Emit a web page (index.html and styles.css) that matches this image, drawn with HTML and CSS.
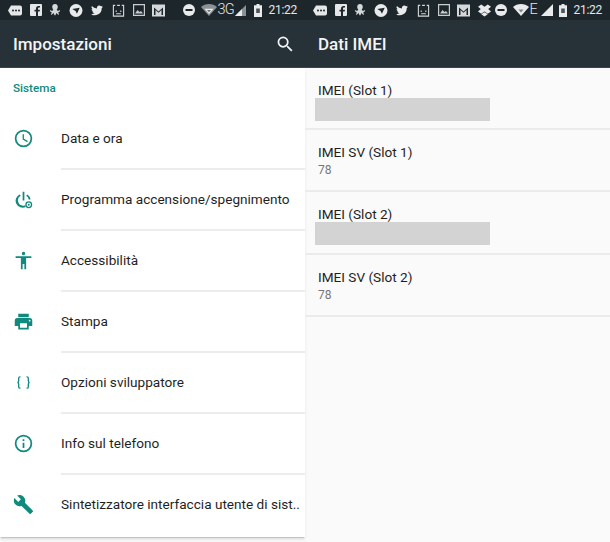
FILE: index.html
```html
<!DOCTYPE html>
<html lang="it">
<head>
<meta charset="utf-8">
<title>Impostazioni</title>
<link rel="stylesheet" href="styles.css">
</head>
<body>
<svg class="defs" width="0" height="0" aria-hidden="true">
  <defs>
    <symbol id="s-msg" viewBox="0 0 14 12"><path d="M3 1h9a2 2 0 0 1 2 2v6a2 2 0 0 1-2 2H3L0 6z" fill="#e4e6e7"/><circle cx="5" cy="6" r="1" fill="#1d262b"/><circle cx="8" cy="6" r="1" fill="#1d262b"/><circle cx="11" cy="6" r="1" fill="#1d262b"/></symbol>
    <symbol id="s-fb" viewBox="0 0 12 12"><path d="M1 0h10a1 1 0 0 1 1 1v10a1 1 0 0 1-1 1H8V7.500h1.600L10 5.700H8V4.500c0-.6.300-.9 1-.9h1V2H8.500C7 2 6 3 6 4.500v1.200H4.500v1.800H6V12H1a1 1 0 0 1-1-1V1a1 1 0 0 1 1-1z" fill="#e4e6e7"/></symbol>
    <symbol id="s-oct" viewBox="0 0 12 13"><path d="M6 0c2 0 3 1.300 3 3s-.6 2.500-1 3c-.4.600.4 1 1 1.300.8.300 2 0 2.500-1 .3 1.500-.8 2.700-2 2.700.2 1 .6 2 1 2.500-1.300.2-2.400-.8-3-2-.3 1-.6 2.300-1.500 3-.9-.7-1.200-2-1.500-3-.6 1.200-1.700 2.200-3 2 .4-.5.800-1.500 1-2.500-1.200 0-2.300-1.200-2-2.700.5 1 1.700 1.300 2.500 1C3.600 7 4.400 6.600 4 6c-.4-.5-1-1.300-1-3s1-3 3-3z" fill="#d5d8d9"/></symbol>
    <symbol id="s-tg" viewBox="0 0 14 14"><circle cx="7" cy="7" r="7" fill="#e8eaeb"/><path d="M3 5.500 11 4 8 10.500 6.500 7.500z" fill="#1d262b"/></symbol>
    <symbol id="s-tw" viewBox="0 0 24 24"><path fill="#e8eaeb" d="M23 4.900c-.8.400-1.700.6-2.600.8a4.500 4.500 0 0 0 2-2.500c-.9.500-1.900.9-2.900 1.100a4.500 4.500 0 0 0-7.700 4.100A12.800 12.800 0 0 1 2.500 3.700a4.500 4.500 0 0 0 1.400 6c-.7 0-1.400-.2-2-.6 0 2.200 1.500 4.100 3.600 4.500-.7.200-1.400.2-2 .1.600 1.800 2.200 3.100 4.200 3.100A9 9 0 0 1 1 18.700 12.800 12.800 0 0 0 20.700 7.300c.9-.6 1.700-1.400 2.300-2.400z"/></symbol>
    <symbol id="s-tv" viewBox="0 0 13 14"><path d="M3 1.500H1V13h11V1.500h-2M5 1.500h3" fill="none" stroke="#d5d8d9" stroke-width="1.200"/><path d="M4 7v1.500M9 7v1.500M4 10.500h5" stroke="#d5d8d9" stroke-width="1.200"/></symbol>
    <symbol id="s-img" viewBox="0 0 12 12"><path d="M.6.600h10.800v10.800H.6z" fill="none" stroke="#c9cdcf" stroke-width="1.200"/><path d="M2 9.500 4.500 6 6.500 8 8 7l2 2.500z" fill="#c9cdcf"/></symbol>
    <symbol id="s-gm" viewBox="0 0 13 12"><rect x="0" y="0" width="13" height="12" fill="#d5d8d9"/><path d="M2 10.500V3l4.500 4L11 3v7.500z" fill="#1d262b"/><path d="M3.500 10.500V5.500l3 2.700 3-2.700v5z" fill="#d5d8d9"/></symbol>
    <symbol id="s-dnd" viewBox="0 0 12 12"><circle cx="6" cy="6" r="6" fill="#e8eaeb"/><rect x="2.500" y="5" width="7" height="2" fill="#1d262b"/></symbol>
    <symbol id="s-wifi" viewBox="0 0 16 12"><path d="M0 3C4-1 12-1 16 3L8 12z" fill="#e8eaeb"/><path d="M5.500 5.500h5L8 8.500z" fill="#7e8588"/></symbol>
    <symbol id="s-wifi-dim" viewBox="0 0 16 12"><path d="M0 3C4-1 12-1 16 3L8 12z" fill="#8b9194"/><path d="M3.500 4.800h9L8 10z" fill="#e8eaeb"/><path d="M6 6h4L8 8.200z" fill="#6c7376"/></symbol>
    <symbol id="s-sig" viewBox="0 0 11 11"><path d="M11 0v11H0z" fill="#e8eaeb"/></symbol>
    <symbol id="s-sig-dim" viewBox="0 0 11 11"><path d="M11 0v11H0z" fill="#8b9194"/><path d="M7 4v7H0z" fill="#e8eaeb"/></symbol>
    <symbol id="s-bat" viewBox="0 0 8 13"><path d="M2.500 0h3v1.300H8V13H0V1.300h2.500z" fill="#e8eaeb"/><path d="M2.200 4.500h3.600v4.500H2.200z" fill="#4a5357"/></symbol>
    <symbol id="s-drop" viewBox="0 0 14 13"><path d="M3.500 0 7 2.500 10.500 0 14 2.500 11 5l3 2.500L10.500 10 7 7.500 3.500 10 0 7.500 3 5 0 2.500zM3.500 10.500 7 13l3.500-2.500L7 8.500z" fill="#e8eaeb"/></symbol>
  </defs>
</svg>
<main class="screens">
  <section class="screen screen-left">
    <div class="status">
      <div class="status-group">
        <svg class="si w14" aria-hidden="true"><use href="#s-msg"/></svg>
        <svg class="si w12" aria-hidden="true"><use href="#s-fb"/></svg>
        <svg class="si w12" aria-hidden="true"><use href="#s-oct"/></svg>
        <svg class="si w14" aria-hidden="true"><use href="#s-tg"/></svg>
        <svg class="si w14" aria-hidden="true"><use href="#s-tw"/></svg>
        <svg class="si w13" aria-hidden="true"><use href="#s-tv"/></svg>
        <svg class="si w12" aria-hidden="true"><use href="#s-img"/></svg>
        <svg class="si w13" aria-hidden="true"><use href="#s-gm"/></svg>
      </div>
      <div class="status-group status-right">
        <svg class="si w12 dnd-gap" aria-hidden="true"><use href="#s-dnd"/></svg>
        <svg class="si w16" aria-hidden="true"><use href="#s-wifi-dim"/></svg>
        <span class="net net-3g">3G</span>
        <svg class="si w11" aria-hidden="true"><use href="#s-sig-dim"/></svg>
        <svg class="si w8 bat" aria-hidden="true"><use href="#s-bat"/></svg>
        <span class="clock">21:22</span>
      </div>
    </div>
    <header class="appbar">
      <h1 class="title">Impostazioni</h1>
      <svg class="search" viewBox="0 0 24 24" aria-hidden="true"><path fill="#f3f4f5" d="M15.500 14h-.79l-.28-.27A6.470 6.470 0 0 0 16 9.500 6.500 6.500 0 1 0 9.500 16c1.610 0 3.090-.59 4.230-1.570l.27.28v.79l5 4.990L20.490 19l-4.990-5zm-6 0C7.010 14 5 11.990 5 9.500S7.010 5 9.500 5 14 7.010 14 9.500 11.990 14 9.500 14z"/></svg>
    </header>
    <div class="settings">
      <h2 class="section">Sistema</h2>
      <ul class="list">
        <li class="item">
          <svg class="ico" viewBox="0 0 24 24" aria-hidden="true"><path d="M12 2a10 10 0 1 0 0 20 10 10 0 0 0 0-20zm0 18a8 8 0 1 1 0-16 8 8 0 0 1 0 16zm.5-13H11v6l5.200 3.200.8-1.300-4.500-2.700z"/></svg>
          <span class="label">Data e ora</span>
        </li>
        <li class="item">
          <svg class="ico" viewBox="0 0 24 24" aria-hidden="true"><path d="M11 3h2v10h-2zM7.500 6.200l1.400 1.500A6 6 0 0 0 12 19c.7 0 1.300-.1 1.900-.3l.6 1.900A8 8 0 0 1 7.500 6.200zM16.500 6.200A8 8 0 0 1 20 12h-2a6 6 0 0 0-2.900-4.300z"/><circle cx="18" cy="18" r="3.200" fill="none" stroke="#118a7e" stroke-width="1.500"/><circle cx="18" cy="18" r="1.100"/></svg>
          <span class="label">Programma accensione/spegnimento</span>
        </li>
        <li class="item">
          <svg class="ico" viewBox="0 0 24 24" aria-hidden="true"><path d="M12 2a2 2 0 1 1 0 4 2 2 0 0 1 0-4zm9 7h-6v13h-2v-6h-2v6H9V9H3V7h18z"/></svg>
          <span class="label">Accessibilità</span>
        </li>
        <li class="item">
          <svg class="ico" viewBox="0 0 24 24" aria-hidden="true"><path d="M19 8H5a3 3 0 0 0-3 3v6h4v4h12v-4h4v-6a3 3 0 0 0-3-3zm-3 11H8v-5h8zm3-7a1 1 0 1 1 0-2 1 1 0 0 1 0 2zm-1-9H6v4h12z"/></svg>
          <span class="label">Stampa</span>
        </li>
        <li class="item">
          <svg class="ico" viewBox="0 0 24 24" aria-hidden="true"><path fill="none" stroke="#118a7e" stroke-width="1.500" d="M8.500 5.500H8c-1 0-1.500.6-1.500 1.500v3c0 1-.5 2-1.500 2 1 0 1.500 1 1.500 2v3c0 .9.500 1.500 1.500 1.500h.5M15.500 5.500h.5c1 0 1.500.6 1.500 1.500v3c0 1 .5 2 1.500 2-1 0-1.500 1-1.500 2v3c0 .9-.5 1.500-1.500 1.500h-.5"/></svg>
          <span class="label">Opzioni sviluppatore</span>
        </li>
        <li class="item">
          <svg class="ico" viewBox="0 0 24 24" aria-hidden="true"><path d="M12 2a10 10 0 1 0 0 20 10 10 0 0 0 0-20zm0 18a8 8 0 1 1 0-16 8 8 0 0 1 0 16zM11 11h2v6h-2zM11 7h2v2h-2z"/></svg>
          <span class="label">Info sul telefono</span>
        </li>
        <li class="item item-last">
          <svg class="ico" viewBox="0 0 24 24" aria-hidden="true"><path d="M22.700 19 13.600 9.900c.9-2.300.4-5-1.500-6.900-2-2-5-2.400-7.400-1.300L9 6 6 9 1.600 4.700C.4 7.100.9 10.100 2.900 12.100c1.900 1.900 4.600 2.400 6.900 1.500l9.100 9.100c.4.400 1 .4 1.400 0l2.300-2.300c.5-.4.500-1.100.1-1.400z"/></svg>
          <span class="label">Sintetizzatore interfaccia utente di sist..</span>
        </li>
      </ul>
    </div>
  </section>
  <section class="screen screen-right">
    <div class="status">
      <div class="status-group">
        <svg class="si w14" aria-hidden="true"><use href="#s-msg"/></svg>
        <svg class="si w12" aria-hidden="true"><use href="#s-fb"/></svg>
        <svg class="si w12" aria-hidden="true"><use href="#s-oct"/></svg>
        <svg class="si w14" aria-hidden="true"><use href="#s-tg"/></svg>
        <svg class="si w14" aria-hidden="true"><use href="#s-tw"/></svg>
        <svg class="si w13" aria-hidden="true"><use href="#s-tv"/></svg>
        <svg class="si w12" aria-hidden="true"><use href="#s-img"/></svg>
        <svg class="si w13" aria-hidden="true"><use href="#s-gm"/></svg>
        <svg class="si w13" aria-hidden="true"><use href="#s-drop"/></svg>
      </div>
      <div class="status-group status-right">
        <svg class="si w12 dnd-gap" aria-hidden="true"><use href="#s-dnd"/></svg>
        <svg class="si w16" aria-hidden="true"><use href="#s-wifi"/></svg>
        <span class="net net-e">E</span>
        <svg class="si w11 sig-wide" aria-hidden="true"><use href="#s-sig"/></svg>
        <svg class="si w8 bat" aria-hidden="true"><use href="#s-bat"/></svg>
        <span class="clock">21:22</span>
      </div>
    </div>
    <header class="appbar">
      <h1 class="title">Dati IMEI</h1>
    </header>
    <ul class="imei">
      <li class="imei-row">
        <span class="imei-name">IMEI (Slot 1)</span>
        <span class="redacted"></span>
      </li>
      <li class="imei-row">
        <span class="imei-name">IMEI SV (Slot 1)</span>
        <span class="imei-value">78</span>
      </li>
      <li class="imei-row">
        <span class="imei-name">IMEI (Slot 2)</span>
        <span class="redacted"></span>
      </li>
      <li class="imei-row">
        <span class="imei-name">IMEI SV (Slot 2)</span>
        <span class="imei-value">78</span>
      </li>
    </ul>
  </section>
</main>
</body>
</html>
```
FILE: styles.css
```css
* { box-sizing: border-box; }
html, body { margin: 0; padding: 0; }
body {
  width: 610px;
  height: 542px;
  overflow: hidden;
  background: #fafafa;
  font-family: Roboto, "Liberation Sans", sans-serif;
}
.defs { display: block; height: 0; }
.screens {
  display: grid;
  grid-template-columns: 305px 305px;
  height: 542px;
}
.screen {
  display: flex;
  flex-direction: column;
  height: 542px;
  min-width: 0;
}
.status {
  height: 20px;
  flex: none;
  background: #1d262b;
  display: flex;
  align-items: center;
  justify-content: space-between;
  padding: 0 8px;
  color: #e4e6e7;
}
.status-group {
  display: flex;
  align-items: center;
  gap: 7.600px;
}
.status-right { gap: 2px; }
.si { display: block; height: 13px; flex: none; }
.w16 { width: 16px; height: 12px; }
.w14 { width: 14px; }
.w13 { width: 13px; }
.w12 { width: 12px; height: 12px; }
.w11 { width: 11px; height: 11px; }
.w8 { width: 8px; }
.sig-wide { width: 12px; height: 12px; margin-right: -2px; }
.dnd-gap { margin-right: 4px; }
.bat { margin-left: 6px; }
.net {
  display: block;
  flex: none;
  margin-left: -1px;
  font-size: 14.500px;
  font-weight: 300;
  line-height: 20px;
  letter-spacing: -1px;
  white-space: nowrap;
}
.net-3g { width: 15px; }
.net-e { width: 9px; }
.clock {
  flex: none;
  font-size: 12px;
  line-height: 20px;
  letter-spacing: -.3px;
  margin-left: 5px;
}
.appbar {
  height: 48px;
  flex: none;
  background: #263238;
  display: flex;
  align-items: center;
  justify-content: space-between;
  padding: 1px 10px 0 13px;
  border-bottom: 1px solid #3c474d;
}
.title {
  margin: 0;
  font-size: 17px;
  font-weight: 500;
  color: #f3f4f5;
}
.search { width: 20.500px; height: 20.500px; display: block; }
.settings {
  flex: none;
  background: #fff;
  display: flex;
  flex-direction: column;
  height: 469px;
  box-shadow: 0 2px 1px -1px #c4c4c4, 0 3px 3px rgba(0, 0, 0, .08);
}
.section {
  margin: 0;
  height: 41px;
  padding: 14px 0 0 13px;
  font-size: 11.700px;
  line-height: 12px;
  font-weight: 500;
  color: #118a7e;
}
.list { list-style: none; margin: 0; padding: 0; }
.item {
  height: 61px;
  display: grid;
  grid-template-columns: 61px 1fr;
  align-items: center;
}
.item::after {
  content: "";
  grid-column: 2;
  grid-row: 1;
  align-self: end;
  height: 2px;
  background: #ececec;
}
.item-last::after { display: none; }
.ico {
  width: 21px;
  height: 21px;
  margin-left: 13px;
  fill: #118a7e;
  display: block;
  grid-column: 1;
  grid-row: 1;
  margin-top: -2px;
}
.label {
  grid-column: 2;
  grid-row: 1;
  font-size: 13.600px;
  color: #1f1f1f;
  white-space: nowrap;
  margin-top: -3px;
}
.imei { list-style: none; margin: 0; padding: 0; }
.imei-row {
  height: 62.200px;
  padding: 14px 0 0 13px;
  border-bottom: 2px solid #ebebeb;
  display: flex;
  flex-direction: column;
  align-items: flex-start;
}
.imei-name {
  font-size: 13.600px;
  line-height: 16px;
  color: #1f1f1f;
}
.imei-value {
  font-size: 12px;
  line-height: 14px;
  margin-top: 3px;
  color: #777;
}
.redacted {
  width: 175px;
  height: 23px;
  margin-left: -3px;
  background: #d3d3d3;
}
```
